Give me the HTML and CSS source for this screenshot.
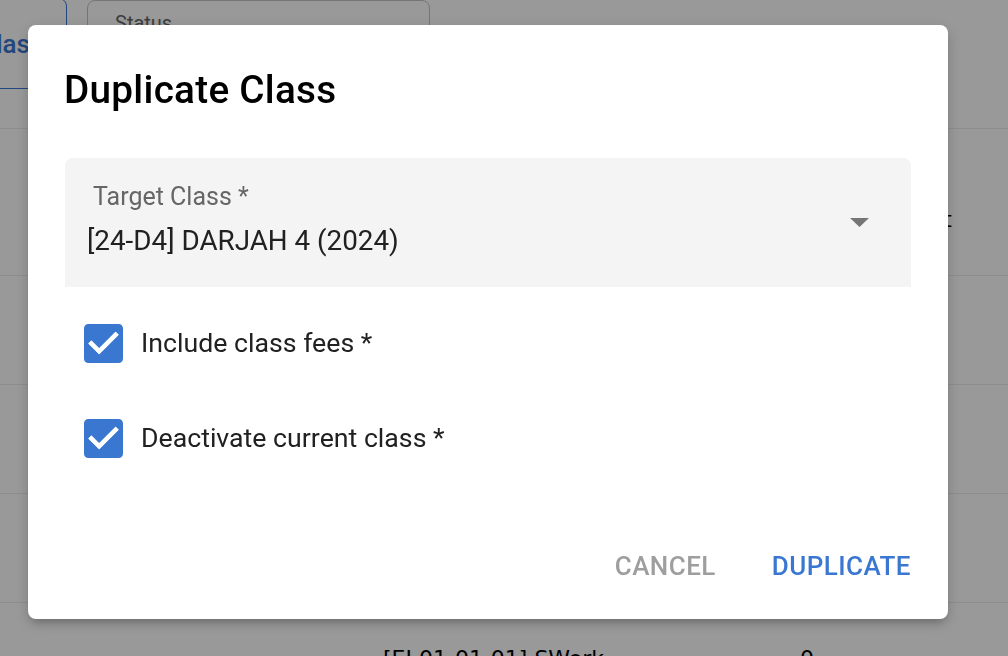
FILE: index.html
```html
<!DOCTYPE html>
<html lang="en">
<head>
<meta charset="utf-8">
<title>Duplicate Class</title>
<link rel="stylesheet" href="styles.css">
</head>
<body>
<div class="page">
  <div class="toolbar">
    <div class="tab">Class</div>
    <div class="status-field"><span class="status-label">Status</span></div>
  </div>
  <div class="row row-first"><span class="cell-end">Student</span></div>
  <div class="row row-mid"></div>
  <div class="row row-mid"></div>
  <div class="row row-mid"></div>
  <div class="row row-last">
    <span class="cell-code">[EI 01-01-01] SWork</span>
    <span class="cell-num">0</span>
  </div>
</div>

<div class="overlay">
  <div class="dialog" role="dialog">
    <h2 class="dialog-title">Duplicate Class</h2>
    <div class="select">
      <div class="select-text">
        <div class="select-label">Target Class *</div>
        <div class="select-value">[24-D4] DARJAH 4 (2024)</div>
      </div>
      <svg class="select-arrow" viewBox="0 0 19 9" width="19" height="9"><polygon points="0,0 19,0 9.5,9" fill="#757575"/></svg>
    </div>
    <label class="check-row">
      <svg class="check" viewBox="3 3 18 18" width="39" height="39"><path fill="#3a77d1" d="M19 3H5c-1.11 0-2 .9-2 2v14c0 1.1.89 2 2 2h14c1.11 0 2-.9 2-2V5c0-1.1-.89-2-2-2zm-9 14l-5-5 1.41-1.41L10 14.17l7.590-7.59L19 8l-9 9z"/><path fill="#fff" d="M10 17l-5-5 1.41-1.41L10 14.17l7.59-7.59L19 8z"/></svg>
      <span class="check-label">Include class fees *</span>
    </label>
    <label class="check-row check-row-second">
      <svg class="check" viewBox="3 3 18 18" width="39" height="39"><path fill="#3a77d1" d="M19 3H5c-1.11 0-2 .9-2 2v14c0 1.1.89 2 2 2h14c1.11 0 2-.9 2-2V5c0-1.1-.89-2-2-2zm-9 14l-5-5 1.41-1.41L10 14.17l7.59-7.59L19 8l-9 9z"/><path fill="#fff" d="M10 17l-5-5 1.41-1.41L10 14.17l7.59-7.59L19 8z"/></svg>
      <span class="check-label">Deactivate current class *</span>
    </label>
    <div class="actions">
      <button class="btn btn-cancel" type="button">Cancel</button>
      <button class="btn btn-primary" type="button">Duplicate</button>
    </div>
  </div>
</div>
</body>
</html>
```

FILE: styles.css
```css
* { box-sizing: border-box; }

html, body {
  margin: 0;
  padding: 0;
  width: 1008px;
  height: 656px;
  overflow: hidden;
  background: #ffffff;
  font-family: Roboto, "Liberation Sans", sans-serif;
}

/* ---------- background page ---------- */
.page {
  width: 1008px;
  height: 656px;
  overflow: hidden;
  color: #000;
}

.toolbar {
  display: flex;
  align-items: flex-start;
  gap: 20px;
  height: 129px;
  border-bottom: 1px solid #ececec;
}

.tab {
  display: flex;
  align-items: center;
  flex: none;
  margin-left: -45px;
  margin-top: -2px;
  width: 112px;
  height: 91px;
  padding-left: 23px;
  border: 1.5px solid #3a77d1;
  border-radius: 0 8px 0 0;
  color: #3a77d1;
  font-size: 26px;
  font-weight: 500;
}

.status-field {
  flex: none;
  width: 343px;
  height: 90px;
  padding: 10px 0 0 27px;
  border: 1.5px solid #c4c4c4;
  border-radius: 8px;
}

.status-label {
  font-size: 20px;
  line-height: 24px;
  color: #666;
}

.row {
  display: flex;
  border-bottom: 1px solid #ececec;
  font-family: "DejaVu Sans", sans-serif;
  font-size: 22px;
  line-height: 26px;
}

.row-first {
  height: 147px;
  justify-content: flex-end;
  padding: 78px 56px 0 0;
}

.row-mid { height: 109px; }

.row-last {
  height: 110px;
  padding: 43px 0 0 383px;
  border-bottom: none;
}

.cell-code { width: 417px; }

/* ---------- overlay + dialog ---------- */
.overlay {
  position: fixed;
  inset: 0;
  background: rgba(0, 0, 0, 0.4);
  display: flex;
  align-items: flex-start;
  justify-content: flex-start;
}

.dialog {
  display: flex;
  flex-direction: column;
  width: 920px;
  height: 594px;
  margin: 25px 0 0 28px;
  padding: 0 37px 37px;
  background: #fff;
  border-radius: 8px;
  box-shadow: 0 6px 10px -4px rgba(0,0,0,0.25), 0 4px 14px 2px rgba(0,0,0,0.12);
}

.dialog-title {
  margin: 42px 0 0 -1px;
  font-size: 38.7px;
  line-height: 46px;
  font-weight: 500;
  letter-spacing: 0.28px;
  color: #000;
}

.select {
  display: flex;
  align-items: center;
  height: 129px;
  margin-top: 45px;
  padding: 0 42px 0 28px;
  background: #f4f4f4;
  border-radius: 8px 8px 0 0;
}

.select-text {
  flex: 1;
  align-self: flex-start;
  padding-top: 25px;
}

.select-label {
  font-size: 25px;
  line-height: 28px;
  color: #666;
}

.select-value {
  margin-top: 13px;
  margin-left: -6px;
  font-size: 27.8px;
  line-height: 34px;
  color: #212121;
}

.select-arrow { display: block; }

.check-row {
  display: flex;
  align-items: center;
  gap: 18px;
  height: 39px;
  margin: 37px 0 0 19px;
}

.check-row-second { margin-top: 56px; }

.check { display: block; flex: none; }

.check-label {
  font-size: 26.7px;
  line-height: 39px;
  color: #212121;
}

.actions {
  display: flex;
  justify-content: flex-end;
  gap: 56px;
  margin-top: auto;
}

.btn {
  padding: 0;
  border: 0;
  background: none;
  font-family: Roboto, "Liberation Sans", sans-serif;
  font-size: 26px;
  line-height: 32px;
  font-weight: 500;
  letter-spacing: 0.45px;
  text-transform: uppercase;
}

.btn-cancel { color: #9e9e9e; }
.btn-primary { color: #3a77d1; }
```
